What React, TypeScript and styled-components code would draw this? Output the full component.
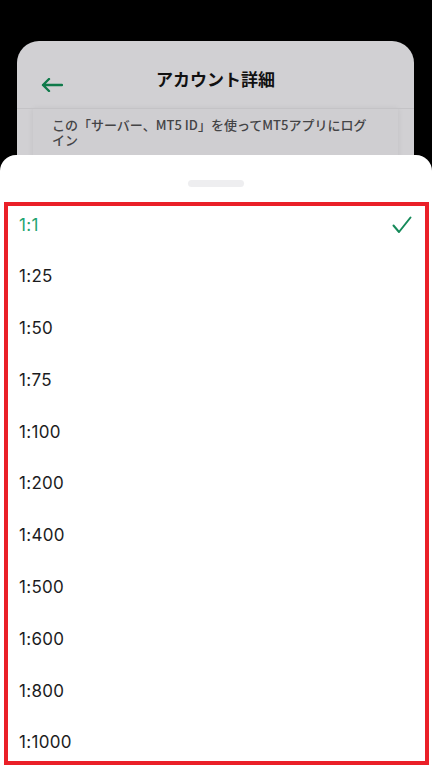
import React, { useState } from "react";
import styled, { createGlobalStyle } from "styled-components";

const GlobalStyle = createGlobalStyle`
    html, body {
        margin: 0;
        padding: 0;
        background: #000;
    }
    body {
        font-family: Inter, "Noto Sans CJK JP", sans-serif;
    }
`;

const Screen = styled.div`
    position: relative;
    width: 432px;
    height: 768px;
    overflow: hidden;
    background: #000;
    padding-top: 41px;
    box-sizing: border-box;
`;

const BackCard = styled.div`
    margin: 0 18px 0 17px;
    height: 727px;
    background: #d1d0d3;
    border-radius: 22px 22px 0 0;
    display: flex;
    flex-direction: column;
`;

const Header = styled.div`
    height: 67px;
    display: flex;
    align-items: center;
    justify-content: center;
    position: relative;
    border-bottom: 1px solid #c4c3c6;
`;

const BackButton = styled.div`
    position: absolute;
    left: 24px;
    top: 37px;
    display: flex;
`;

const Title = styled.h1`
    margin: 0;
    margin-top: 8px;
    font-size: 17px;
    font-weight: 700;
    color: #111;
    font-family: "Noto Sans CJK JP", sans-serif;
`;

const InfoPanel = styled.div`
    margin: 0 16px;
    flex: 1;
    background: #cfced1;
    box-shadow: 0 0 6px rgba(0, 0, 0, 0.08);
    padding: 8px 22px 0 19px;
`;

const InfoText = styled.p`
    margin: 0;
    font-size: 13px;
    line-height: 15px;
    font-weight: 500;
    color: #444446;
    font-family: "Noto Sans CJK JP", sans-serif;
`;

const Sheet = styled.div`
    position: absolute;
    top: 155px;
    left: 0;
    right: 0;
    bottom: 0;
    background: #fff;
    border-radius: 16px 16px 0 0;
    display: flex;
    flex-direction: column;
    align-items: center;
`;

const Handle = styled.div`
    margin-top: 25px;
    width: 56px;
    height: 7px;
    border-radius: 4px;
    background: #eeeef0;
`;

const OptionBox = styled.div`
    margin-top: 15px;
    align-self: stretch;
    margin-left: 4px;
    margin-right: 3px;
    height: 563px;
    box-sizing: border-box;
    border: 4px solid #ea1f28;
    overflow: hidden;
`;

const OptionRow = styled.div<{ $active: boolean }>`
    height: 51.8px;
    padding: 7.5px 13px 0 11px;
    box-sizing: border-box;
    display: flex;
    justify-content: space-between;
    align-items: flex-start;
    font-size: 17px;
    line-height: 22px;
    font-weight: 400;
    letter-spacing: 0.3px;
    color: ${(props) => (props.$active ? "#22a46f" : "#1c1c1e")};
    cursor: pointer;
`;

const CheckMark = styled.svg`
    margin-top: 2px;
`;

const leverages = ["1:1", "1:25", "1:50", "1:75", "1:100", "1:200", "1:400", "1:500", "1:600", "1:800", "1:1000"];

function App() {
    const [selected, setSelected] = useState("1:1");
    return (
        <Screen>
            <GlobalStyle />
            <BackCard>
                <Header>
                    <BackButton>
                        <svg width="22" height="14" viewBox="0 0 22 14" fill="none">
                            <path d="M21 7H2M8 1L2 7l6 6" stroke="#0f7a4a" strokeWidth="2.4" strokeLinecap="round" strokeLinejoin="round" />
                        </svg>
                    </BackButton>
                    <Title>アカウント詳細</Title>
                </Header>
                <InfoPanel>
                    <InfoText>この「サーバー、MT5 ID」を使ってMT5アプリにログイン</InfoText>
                </InfoPanel>
            </BackCard>
            <Sheet>
                <Handle />
                <OptionBox>
                    {leverages.map((item) => (
                        <OptionRow key={item} $active={item === selected} onClick={() => setSelected(item)}>
                            <span>{item}</span>
                            {item === selected && (
                                <CheckMark width="20" height="18" viewBox="0 0 20 18" fill="none">
                                    <path d="M1.5 9.5l5.5 6.5L18.5 1.5" stroke="#168a5a" strokeWidth="2" strokeLinecap="round" strokeLinejoin="round" />
                                </CheckMark>
                            )}
                        </OptionRow>
                    ))}
                </OptionBox>
            </Sheet>
        </Screen>
    );
}

export default App;
